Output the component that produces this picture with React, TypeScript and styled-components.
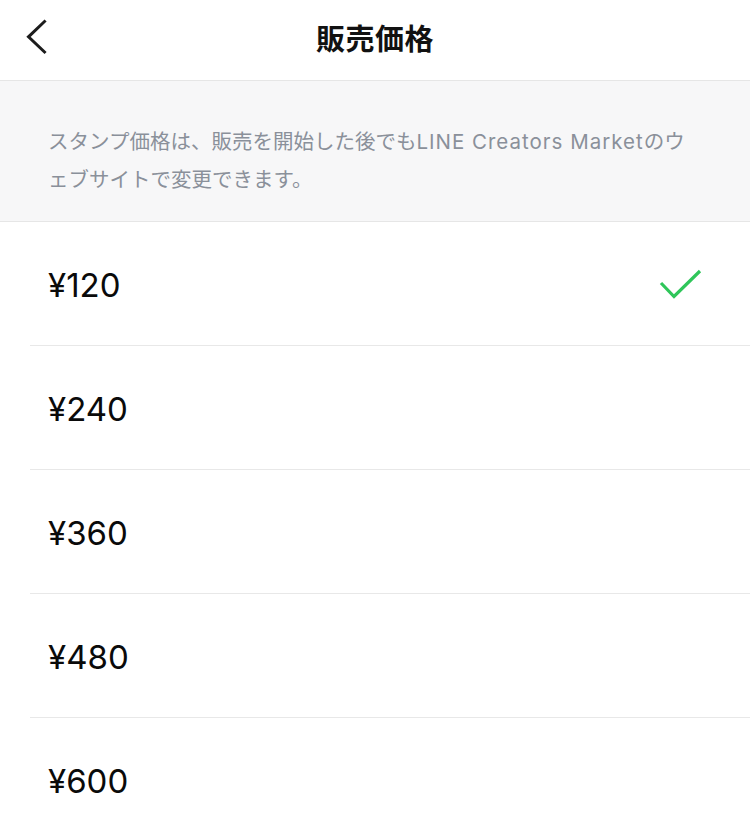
import { createGlobalStyle } from "styled-components";
import styled from "styled-components";

const prices = [120, 240, 360, 480, 600];
const selected = 120;

const App = () => {
  return (
    <>
      <GlobalStyle />
      <Page>
        <Header>
          <BackButton type="button" aria-label="戻る">
            <svg width="24" height="36" viewBox="0 0 24 36" fill="none">
              <path
                d="M20.5 2.5 L4.5 17.8 L20.5 33"
                stroke="#1c1c1c"
                strokeWidth="3"
                strokeLinecap="square"
              />
            </svg>
          </BackButton>
          <Title>販売価格</Title>
          <span />
        </Header>

        <Notice>
          スタンプ価格は、販売を開始した後でも
          <Latin>LINE Creators Market</Latin>
          のウェブサイトで変更できます。
        </Notice>

        <PriceList>
          {prices.map((p) => (
            <PriceRow key={p}>
              <PriceText>¥{p}</PriceText>
              {p === selected && (
                <svg width="44" height="32" viewBox="0 0 44 32" fill="none">
                  <path
                    d="M3 15 L16 28.5 L42 3"
                    stroke="#2fc65a"
                    strokeWidth="3.2"
                  />
                </svg>
              )}
            </PriceRow>
          ))}
        </PriceList>
      </Page>
    </>
  );
};

export default App;

const GlobalStyle = createGlobalStyle`
  body {
    margin: 0;
    background: #ffffff;
    font-family: "Inter", "Noto Sans CJK JP", sans-serif;
  }
`;

const Page = styled.div`
  display: flex;
  flex-direction: column;
  width: 100%;
  background: #fff;
`;

const Header = styled.div`
  height: 81px;
  box-sizing: border-box;
  padding-bottom: 6px;
  display: grid;
  grid-template-columns: 1fr auto 1fr;
  align-items: center;
  border-bottom: 1px solid #e6e6e6;
`;

const BackButton = styled.button`
  justify-self: start;
  margin-left: 24px;
  padding: 0;
  border: none;
  background: transparent;
  display: flex;
  cursor: pointer;
`;

const Title = styled.h1`
  margin: 0;
  font-family: "Noto Sans CJK JP", sans-serif;
  font-size: 29px;
  font-weight: 700;
  color: #111111;
  letter-spacing: 0.5px;
`;

const Notice = styled.p`
  margin: 0;
  padding: 42px 50px 22px 48px;
  background: #f7f7f8;
  border-bottom: 1px solid #e6e6e6;
  font-family: "Inter", "Noto Sans CJK JP", sans-serif;
  font-size: 20.5px;
  line-height: 38px;
  color: #8a909a;
`;

const Latin = styled.span`
  letter-spacing: 1px;
`;

const PriceList = styled.div`
  display: flex;
  flex-direction: column;
`;

const PriceRow = styled.div`
  height: 123px;
  margin-left: 30px;
  padding: 0 48px 0 18px;
  display: flex;
  align-items: center;
  justify-content: space-between;
  border-bottom: 1px solid #e8e8e8;
`;

const PriceText = styled.span`
  font-family: "Inter", sans-serif;
  font-size: 33px;
  color: #0a0a0a;
  padding-top: 3px;
`;
